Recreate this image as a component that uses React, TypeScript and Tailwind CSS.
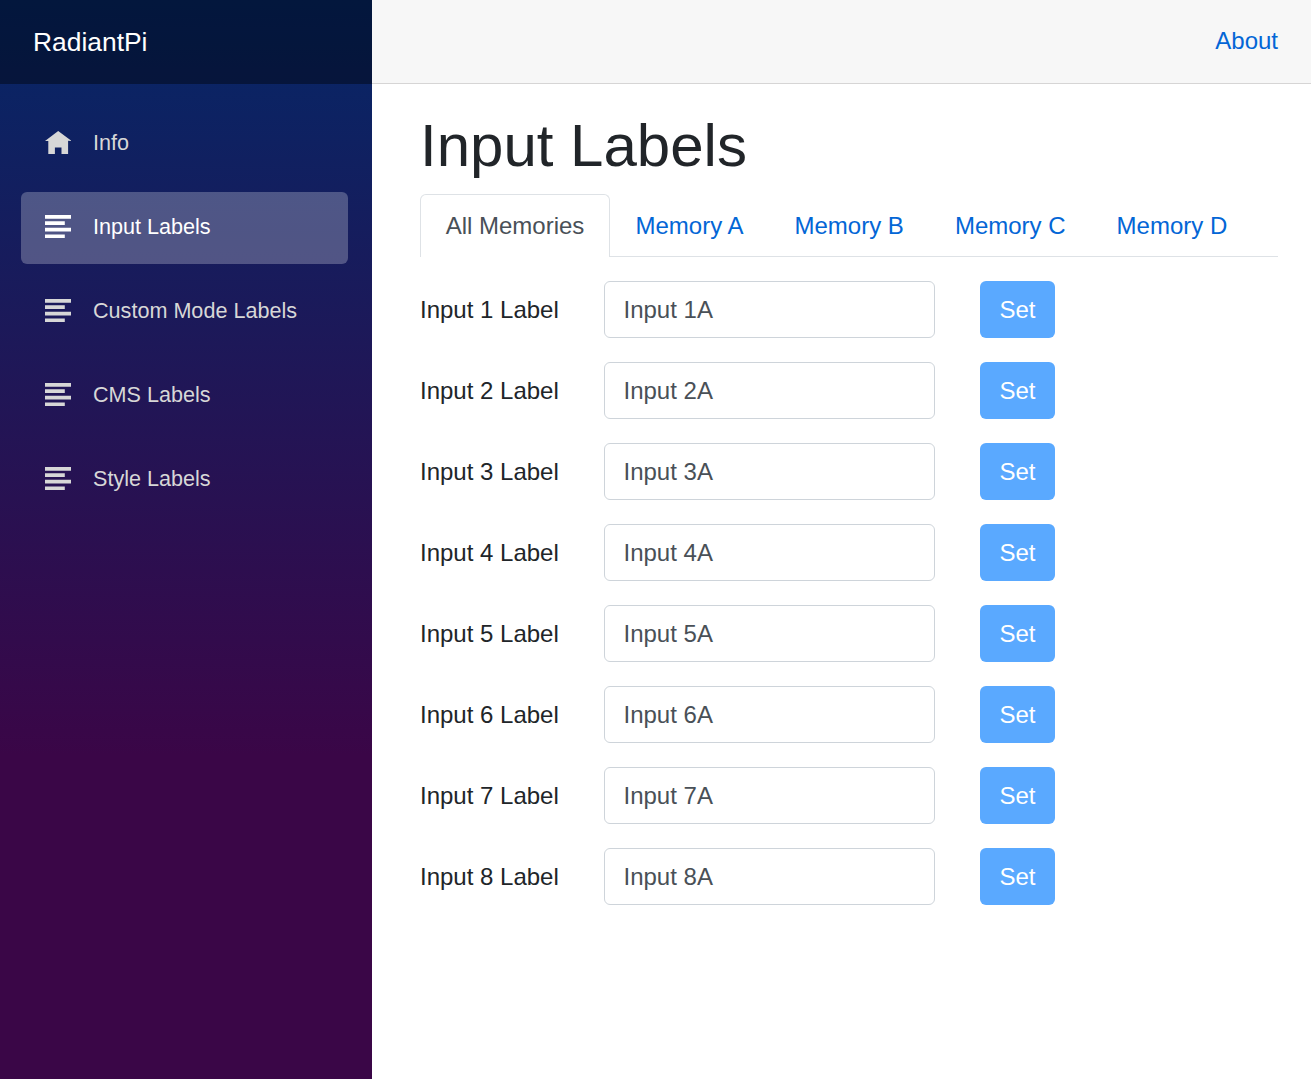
import React from "react";

const navItems = [
  { label: "Info", icon: "home" },
  { label: "Input Labels", icon: "list", active: true },
  { label: "Custom Mode Labels", icon: "list" },
  { label: "CMS Labels", icon: "list" },
  { label: "Style Labels", icon: "list" },
];

const tabs = ["Memory A", "Memory B", "Memory C", "Memory D"];
const inputs = [1, 2, 3, 4, 5, 6, 7, 8];

function NavIcon({ name }: { name: string }) {
  return (
    <svg viewBox="0 0 8 8" className="mt-[2.4px] h-[26.4px] w-[26.4px] shrink-0 fill-current">
      {name === "home" ? (
        <path d="M4 0l-4 3h1v4h2v-2h2v2h2v-4.03l1 .03-4-3z" />
      ) : (
        <path d="M0 0v1.1h8v-1.1h-8zm0 1.9v1.1h6v-1.1h-6zm0 2v1.1h8v-1.1h-8zm0 2v1.1h6v-1.1h-6z" />
      )}
    </svg>
  );
}

export default function App() {
  return (
    <div className="flex h-[1079px] w-full overflow-hidden bg-white font-['Liberation_Sans',Arial,sans-serif] text-[24px] leading-[36px] text-[#212529]">
      <aside className="w-[372px] shrink-0 bg-[linear-gradient(180deg,rgb(5,39,103)_0%,#3a0647_70%)]">
        <div className="flex h-[84px] items-center bg-black/40 pl-[33px] text-[26.4px] text-white">
          <a href="#">RadiantPi</a>
        </div>
        <nav className="flex flex-col gap-3 pt-6 pr-6 pl-[21px]">
          {navItems.map((item) => (
            <a
              key={item.label}
              href="#"
              className={`flex h-[72px] items-center gap-[21.6px] rounded-md pb-[2px] pl-6 text-[21.6px] ${
                item.active ? "bg-white/25 text-white" : "text-[#d7d7d7]"
              }`}
            >
              <NavIcon name={item.icon} />
              <span>{item.label}</span>
            </a>
          ))}
        </nav>
      </aside>

      <main className="min-w-0 flex-1">
        <header className="flex h-[84px] items-center justify-end border-b border-[#d6d5d5] bg-[#f7f7f7] pr-[33px] pb-[2px] text-[#0366d6]">
          <a href="#">About</a>
        </header>
        <div className="pt-[26px] pr-[33px] pl-12">
          <h1 className="text-[60px] leading-[72px]">Input Labels</h1>
          <div className="mt-3 flex h-[63px] border-b border-[#dee2e6]">
            <button className="h-[63px] w-[190px] shrink-0 rounded-t-md border border-b-0 border-[#dee2e6] bg-white text-[#495057]">
              All Memories
            </button>
            {tabs.map((tab) => (
              <button key={tab} className="h-[63px] shrink-0 px-[25.5px] text-[#0366d6]">
                {tab}
              </button>
            ))}
          </div>
          <form className="mt-6 flex flex-col gap-6">
            {inputs.map((n) => (
              <div key={n} className="flex h-[57px] items-center">
                <label className="w-[184px]">Input {n} Label</label>
                <input
                  className="h-[57px] w-[331px] rounded-md border border-[#ced4da] bg-white px-[18.5px] text-[#495057]"
                  defaultValue={`Input ${n}A`}
                />
                <button type="button" className="ml-[45px] h-[57px] w-[75px] rounded-md bg-[#5aa9ff] text-white">
                  Set
                </button>
              </div>
            ))}
          </form>
        </div>
      </main>
    </div>
  );
}
